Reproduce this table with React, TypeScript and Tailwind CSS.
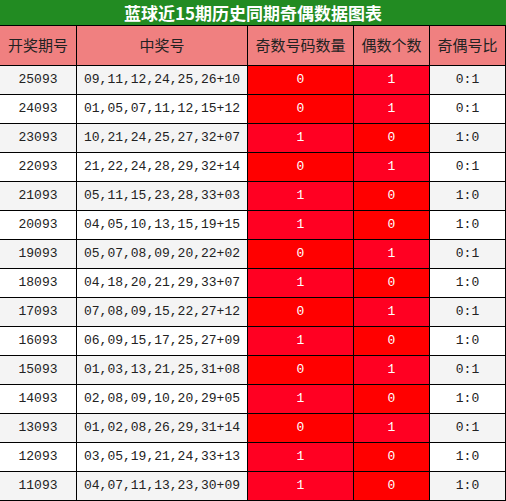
const rows: [string, string, number][] = [
  ["25093", "09,11,12,24,25,26+10", 0],
  ["24093", "01,05,07,11,12,15+12", 0],
  ["23093", "10,21,24,25,27,32+07", 1],
  ["22093", "21,22,24,28,29,32+14", 0],
  ["21093", "05,11,15,23,28,33+03", 1],
  ["20093", "04,05,10,13,15,19+15", 1],
  ["19093", "05,07,08,09,20,22+02", 0],
  ["18093", "04,18,20,21,29,33+07", 1],
  ["17093", "07,08,09,15,22,27+12", 0],
  ["16093", "06,09,15,17,25,27+09", 1],
  ["15093", "01,03,13,21,25,31+08", 0],
  ["14093", "02,08,09,10,20,29+05", 1],
  ["13093", "01,02,08,26,29,31+14", 0],
  ["12093", "03,05,19,21,24,33+13", 1],
  ["11093", "04,07,11,13,23,30+09", 1],
];

const cjk = "font-['Noto_Sans_CJK_SC',sans-serif]";
const mono = "font-['Liberation_Mono',monospace] text-[13px]";
const cell = "flex items-center justify-center border-r border-b border-black";
const widths = ["w-[77px]", "w-[171px]", "w-[106px]", "w-[76px]", "w-[76px]"];

function redCell(v: number, w: string) {
  return (
    <div className={`${cell} ${w} ${v === 1 ? "bg-[#ff0022]" : "bg-[#ff0000]"} text-white`}>
      {v}
    </div>
  );
}

export default function App() {
  const headers = ["开奖期号", "中奖号", "奇数号码数量", "偶数个数", "奇偶号比"];
  return (
    <div className="w-[506px] h-[501px] flex flex-col bg-white">
      <div
        className={`h-[26px] flex items-center justify-center bg-[#228b22] border-b border-black text-white font-bold text-[17px] ${cjk}`}
      >
        蓝球近15期历史同期奇偶数据图表
      </div>
      <div className={`flex h-[40px] bg-[#f08080] text-[15px] text-[#222] ${cjk}`}>
        {headers.map((h, i) => (
          <div key={h} className={`${cell} ${widths[i]}`}>
            {h}
          </div>
        ))}
      </div>
      {rows.map(([issue, nums, odd], i) => (
        <div
          key={issue}
          className={`flex h-[29px] ${mono} text-[#222] ${i % 2 === 0 ? "bg-[#f4f4f4]" : "bg-white"}`}
        >
          <div className={`${cell} ${widths[0]}`}>{issue}</div>
          <div className={`${cell} ${widths[1]}`}>{nums}</div>
          {redCell(odd, widths[2])}
          {redCell(1 - odd, widths[3])}
          <div className={`${cell} ${widths[4]}`}>{odd === 1 ? "1:0" : "0:1"}</div>
        </div>
      ))}
    </div>
  );
}
